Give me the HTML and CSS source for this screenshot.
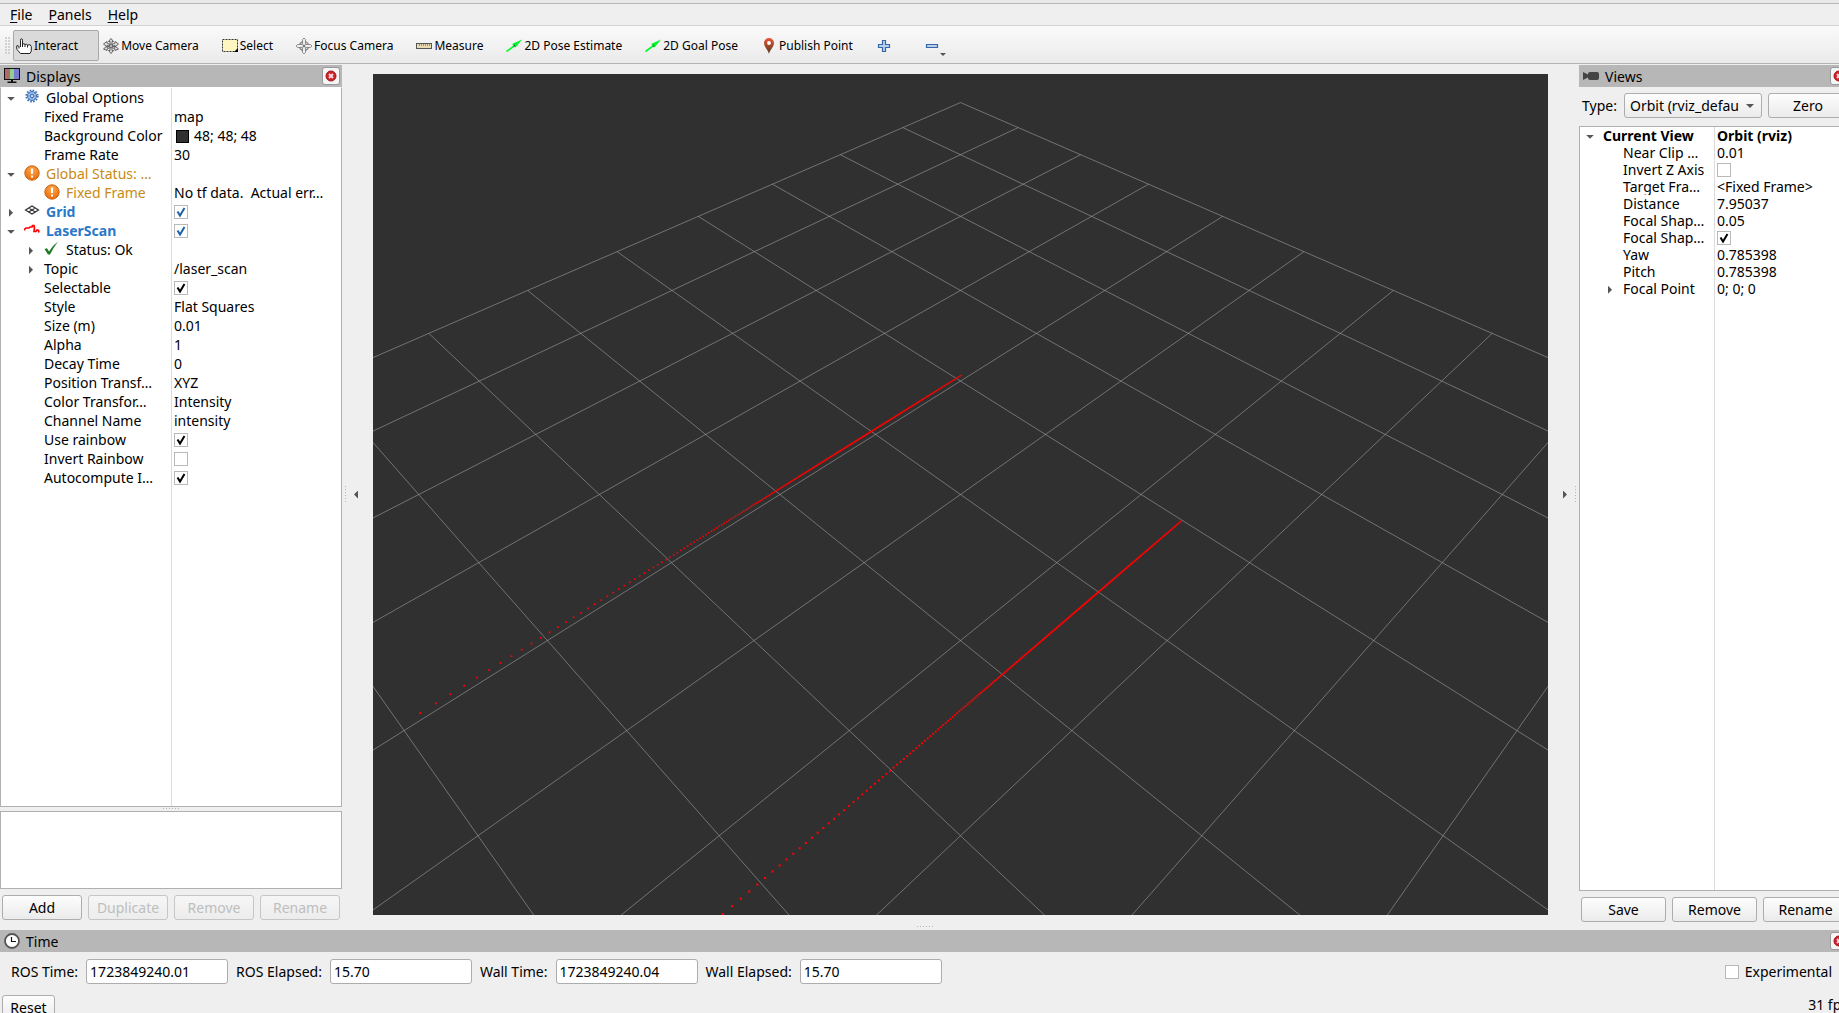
FILE: index.html
```html
<!DOCTYPE html>
<html lang="en">
<head>
  <meta charset="UTF-8" />
  <meta name="viewport" content="width=device-width, initial-scale=1.0"/>
  <title>RViz</title>
  <link rel="stylesheet" href="styles.css">
</head>
<body>

  <!-- shared icons -->
  <svg class="defs" aria-hidden="true">
    <defs>
      <radialGradient id="orange" cx="50%" cy="30%" r="70%">
        <stop offset="0" stop-color="#ffa94d"/>
        <stop offset="1" stop-color="#e8690b"/>
      </radialGradient>
      <linearGradient id="pin" x1="0" y1="0" x2="0" y2="1">
        <stop offset="0" stop-color="#f0553a"/>
        <stop offset="1" stop-color="#4a3a1c"/>
      </linearGradient>
    </defs>
    <symbol id="icon-close" viewBox="0 0 12 12">
      <circle cx="6" cy="6" r="5" fill="#cc2229" stroke="#a8141b"/>
      <path d="M4 4l4 4M8 4l-4 4" stroke="#f6d5d6" stroke-width="2"/>
    </symbol>
    <symbol id="icon-warn" viewBox="0 0 16 16">
      <circle cx="8" cy="8" r="7.2" fill="url(#orange)" stroke="#c9640f"/>
      <path d="M8 3.5v5.5M8 10.5v2" stroke="#fff" stroke-width="2"/>
    </symbol>
    <symbol id="icon-pose" viewBox="0 0 16 16">
      <path d="M0.5 13.500L8 8" stroke="#00ff2a" stroke-width="1.600"/>
      <path d="M16 1.500L6 6 9.500 9.500z" fill="#00f52d"/>
      <path d="M7 8.500l1.600-2 1 2z" fill="#0a7a20"/>
    </symbol>
  </svg>

  <div class="app">
    <nav class="menubar">
      <a href="#"><u>F</u>ile</a>
      <a href="#"><u>P</u>anels</a>
      <a href="#"><u>H</u>elp</a>
    </nav>

    <div class="toolbar">
      <span class="grip"></span>
      <button class="tool active">
        <svg class="icon" viewBox="0 0 16 16"><path d="M4.500 9V2.200q0-1.400 1-1.400t1 1.400V6q1.800-.8 2.500.5Q10.700 5.800 11.500 7q3.500-1.200 3.800 1.500V13l-1.300 2.500H4.500L1 11.500Q.2 8.500 1 7.500L3 8.500v2M6.500 6v3M9 6.500V9M11.500 7v2.500" fill="#fff" stroke="#222"/></svg>
        Interact
      </button>
      <button class="tool">
        <svg class="icon" viewBox="0 0 16 16" fill="#ddd" stroke="#555" stroke-width=".9"><path d="M8 .5l2.500 3H9v3l3-1.500V3.500l3.500 2.500-3.500 3V7.500L9.500 8l2.500 1.500V8l3.500 3-3.500 1.500V11L9 9.500v3h1.500L8 15.500l-2.500-3H7v-3L4 11v1.500L.5 11 4 8v1.500L6.500 8 4 7.500V9L.5 6 4 3.500V5l3 1.500v-3H5.500z"/><circle cx="8" cy="8" r="1.500"/></svg>
        Move Camera
      </button>
      <button class="tool">
        <svg class="icon" viewBox="0 0 16 16"><rect x=".5" y="1.500" width="15" height="12" fill="#fdf6c0" stroke="#333" stroke-dasharray="2 1"/><path d="M16 10v4h-4z" fill="#000"/></svg>
        Select
      </button>
      <button class="tool">
        <svg class="icon" viewBox="0 0 16 16" fill="none" stroke="#777"><circle cx="8" cy="8" r="4.500" stroke="#888" stroke-width="1.500"/><path d="M8 0l1.500 1.500V6.500h5L16 8l-1.500 1.500h-5v5L8 16l-1.500-1.500v-5h-5L0 8l1.500-1.500h5v-5z" fill="#eee" stroke-width=".8"/><circle cx="8" cy="8" r="1" fill="#666"/></svg>
        Focus Camera
      </button>
      <button class="tool">
        <svg class="icon" viewBox="0 0 16 16"><rect x=".5" y="5.500" width="15" height="5" fill="#e9dcb4" stroke="#555"/><path d="M3.500 6v2M5.500 6v2M7.500 6v2M9.500 6v2M11.500 6v2M13.500 6v2" stroke="#8a8268" stroke-width=".8"/></svg>
        Measure
      </button>
      <button class="tool"><svg class="icon"><use href="#icon-pose"/></svg>2D Pose Estimate</button>
      <button class="tool"><svg class="icon"><use href="#icon-pose"/></svg>2D Goal Pose</button>
      <button class="tool">
        <svg class="icon" viewBox="0 0 16 16"><path d="M8 16C7.500 12.500 3 9 3 5a5 5 0 0 1 10 0c0 4-4.500 7.500-5 11z" fill="url(#pin)"/><circle cx="8" cy="5" r="1.900" fill="#fff"/></svg>
        Publish Point
      </button>
      <button class="tool icon-only" aria-label="Add tool">
        <svg class="icon" viewBox="0 0 16 16"><path d="M6.500 2.500h3v4h4v3h-4v4h-3v-4h-4v-3h4z" fill="#b9d0ec" stroke="#3567a8" stroke-width="1.200"/></svg>
      </button>
      <button class="tool icon-only" aria-label="Remove tool">
        <svg class="icon" viewBox="0 0 16 16"><path d="M2.500 6.500h11v3h-11z" fill="#b9d0ec" stroke="#3567a8" stroke-width="1.200"/></svg>
        <span class="menu-arrow"></span>
      </button>
    </div>

    <main class="workspace">
      <section class="dock displays">
        <header class="dock-title">
          <svg class="icon" viewBox="0 0 16 16"><rect x=".5" y=".5" width="15" height="11" fill="#6ea86f" stroke="#111"/><path d="M1 1h5v10H1z" fill="#b06a6a"/><path d="M10 1h5v10h-5z" fill="#7a7ad0"/><path d="M6 1h4v10H6z" fill="#8fcf8f"/><path d="M7 12h2v1.500h3.500v1.500h-9v-1.500H7z" fill="#111"/></svg>
          <h2>Displays</h2>
          <button class="close" aria-label="Close Displays"><svg><use href="#icon-close"/></svg></button>
        </header>
        <div class="tree">
          <table>
            <tr>
              <td class="name"><i class="arrow open"></i><svg class="icon" viewBox="0 0 16 16"><circle cx="8" cy="7" r="5.700" fill="none" stroke="#3a6fb5" stroke-width="1.800" stroke-dasharray="1.600 1.380"/><circle cx="8" cy="7" r="4.500" fill="#a9c6ea" stroke="#3a6fb5"/><path d="M8 3v8M4 7h8M5.200 4.200l5.600 5.600M10.800 4.200L5.200 9.800" stroke="#5d8cc8" stroke-width=".8"/><circle cx="8" cy="7" r="1.500" fill="#fff" stroke="#3a6fb5"/></svg>Global Options</td>
              <td></td>
            </tr>
            <tr><td class="name child">Fixed Frame</td><td>map</td></tr>
            <tr><td class="name child">Background Color</td><td><span class="swatch"></span>48; 48; 48</td></tr>
            <tr><td class="name child">Frame Rate</td><td>30</td></tr>
            <tr class="warn"><td class="name"><i class="arrow open"></i><svg class="icon"><use href="#icon-warn"/></svg>Global Status: …</td><td></td></tr>
            <tr class="warn"><td class="name child"><svg class="icon"><use href="#icon-warn"/></svg>Fixed Frame</td><td>No tf data.  Actual err…</td></tr>
            <tr class="display">
              <td class="name"><i class="arrow"></i><svg class="icon" viewBox="0 0 16 16" fill="none" stroke="#333" stroke-width="1.200"><path d="M1.500 7L8 3l6.500 4L8 11zM4.700 5l6.600 4M11.300 5L4.700 9"/></svg><label for="grid">Grid</label></td>
              <td><input type="checkbox" id="grid" class="blue" checked></td>
            </tr>
            <tr class="display">
              <td class="name"><i class="arrow open"></i><svg class="icon" viewBox="0 0 16 16" fill="none" stroke="#f00" stroke-width="1.700"><path d="M.5 8.500V7.500L2 6h3l1-1h2l.5-1.500H10l.5 3-.5 3h2l1-1.500 1.500.5.5 2"/></svg><label for="laser">LaserScan</label></td>
              <td><input type="checkbox" id="laser" class="blue" checked></td>
            </tr>
            <tr><td class="name child"><i class="arrow"></i><svg class="icon" viewBox="0 0 16 16"><path d="M.5 8L3 7.200l2 3.300Q8.500 4.500 14 .5 9.500 6.500 6 13.500H4z" fill="#1d7a22"/></svg>Status: Ok</td><td></td></tr>
            <tr><td class="name child"><i class="arrow"></i>Topic</td><td>/laser_scan</td></tr>
            <tr><td class="name child"><label for="selectable">Selectable</label></td><td><input type="checkbox" id="selectable" checked></td></tr>
            <tr><td class="name child">Style</td><td>Flat Squares</td></tr>
            <tr><td class="name child">Size (m)</td><td>0.01</td></tr>
            <tr><td class="name child">Alpha</td><td>1</td></tr>
            <tr><td class="name child">Decay Time</td><td>0</td></tr>
            <tr><td class="name child">Position Transf…</td><td>XYZ</td></tr>
            <tr><td class="name child">Color Transfor…</td><td>Intensity</td></tr>
            <tr><td class="name child">Channel Name</td><td>intensity</td></tr>
            <tr><td class="name child"><label for="rainbow">Use rainbow</label></td><td><input type="checkbox" id="rainbow" checked></td></tr>
            <tr><td class="name child"><label for="invert-rainbow">Invert Rainbow</label></td><td><input type="checkbox" id="invert-rainbow"></td></tr>
            <tr><td class="name child"><label for="autocompute">Autocompute I…</label></td><td><input type="checkbox" id="autocompute" checked></td></tr>
          </table>
        </div>
        <div class="hsplit"><span class="dots"></span></div>
        <div class="description"></div>
        <div class="buttons">
          <button class="btn">Add</button>
          <button class="btn" disabled>Duplicate</button>
          <button class="btn" disabled>Remove</button>
          <button class="btn" disabled>Rename</button>
        </div>
      </section>

      <div class="vsplit"><span class="dots"></span><i class="arrow left"></i></div>

      <div class="viewport"><canvas id="scene"></canvas></div>

      <div class="vsplit right"><i class="arrow"></i><span class="dots"></span></div>

      <section class="dock views">
        <header class="dock-title">
          <svg class="icon" viewBox="0 0 16 16" fill="#444"><path d="M0 4l5 2.500V6q0-2 2-2h7q2 0 2 2v4q0 2-2 2H7q-2 0-2-2v-.5L0 12z"/></svg>
          <h2>Views</h2>
          <button class="close" aria-label="Close Views"><svg><use href="#icon-close"/></svg></button>
        </header>
        <div class="type-row">
          <label for="view-type">Type:</label>
          <select id="view-type"><option>Orbit (rviz_default_plugins)</option></select>
          <button class="btn">Zero</button>
        </div>
        <div class="tree">
          <table>
            <tr class="current"><td class="name"><i class="arrow open"></i>Current View</td><td>Orbit (rviz)</td></tr>
            <tr><td class="name child">Near Clip …</td><td>0.01</td></tr>
            <tr><td class="name child"><label for="invert-z">Invert Z Axis</label></td><td><input type="checkbox" id="invert-z"></td></tr>
            <tr><td class="name child">Target Fra…</td><td>&lt;Fixed Frame&gt;</td></tr>
            <tr><td class="name child">Distance</td><td>7.95037</td></tr>
            <tr><td class="name child">Focal Shap…</td><td>0.05</td></tr>
            <tr><td class="name child"><label for="focal-fixed">Focal Shap…</label></td><td><input type="checkbox" id="focal-fixed" checked></td></tr>
            <tr><td class="name child">Yaw</td><td>0.785398</td></tr>
            <tr><td class="name child">Pitch</td><td>0.785398</td></tr>
            <tr><td class="name child"><i class="arrow"></i>Focal Point</td><td>0; 0; 0</td></tr>
          </table>
        </div>
        <div class="buttons">
          <button class="btn">Save</button>
          <button class="btn">Remove</button>
          <button class="btn">Rename</button>
        </div>
      </section>

      <span class="dots bottom-dots"></span>
    </main>

    <section class="time">
      <header class="dock-title">
        <svg class="icon" viewBox="0 0 16 16"><circle cx="8" cy="8" r="7" fill="#fff" stroke="#555" stroke-width="1.800"/><path d="M7.500 4v4.500H12" fill="none" stroke="#111" stroke-width="1.200"/></svg>
        <h2>Time</h2>
        <button class="close" aria-label="Close Time"><svg><use href="#icon-close"/></svg></button>
      </header>
      <div class="time-row">
        <label for="ros-time">ROS Time:</label>
        <input type="text" id="ros-time" value="1723849240.01">
        <label for="ros-elapsed">ROS Elapsed:</label>
        <input type="text" id="ros-elapsed" value="15.70">
        <label for="wall-time">Wall Time:</label>
        <input type="text" id="wall-time" value="1723849240.04">
        <label for="wall-elapsed">Wall Elapsed:</label>
        <input type="text" id="wall-elapsed" value="15.70">
        <span class="experimental">
          <input type="checkbox" id="experimental">
          <label for="experimental">Experimental</label>
        </span>
      </div>
      <footer class="status">
        <button class="btn reset">Reset</button>
        <span>31 fps</span>
      </footer>
    </section>
  </div>

  <script src="script.js"></script>
</body>
</html>
```
FILE: styles.css
```css
* {
  box-sizing: border-box;
}

body {
  margin: 0;
  height: 100vh;
  overflow: hidden;
  background: #efefef;
  color: #000;
  font-family: "Noto Sans", sans-serif;
  font-size: 14px;
  line-height: 19px;
}

button, input, select {
  font: inherit;
  color: inherit;
}

.defs {
  position: absolute;
  width: 0;
  height: 0;
}

/* the window is a bit larger than the screen */
.app {
  display: flex;
  flex-direction: column;
  width: calc(100% + 11px);
  height: calc(100vh + 9px);
}

.icon {
  flex: none;
  width: 16px;
  height: 16px;
}

/* Menu and toolbar */
.menubar {
  display: flex;
  gap: 16px;
  height: 26px;
  padding: 2px 10px 0;
  border-top: 3px solid #e9e9e9;
  border-bottom: 1px solid #d3d3d3;
  box-shadow: inset 0 1px #b8b8b8;
}

.menubar a {
  color: inherit;
  text-decoration: none;
}

.menubar u {
  text-underline-offset: 2px;
}

.toolbar {
  display: flex;
  align-items: center;
  height: 38px;
  padding: 2px 5px 0;
  background: linear-gradient(#fafafa, #eaeaea);
  border-bottom: 1px solid #b4b4b4;
}

.grip {
  width: 5px;
  height: 17px;
  margin-right: 3px;
  background: radial-gradient(circle at 1px 1px, #d2d2d2 1px, transparent 1px) 0 0 / 3px 3px;
}

.tool {
  position: relative;
  display: flex;
  align-items: center;
  gap: 2px;
  height: 31px;
  margin-right: 1px;
  padding: 0 18px 0 2px;
  border: 1px solid transparent;
  border-radius: 2px;
  background: none;
  font-size: 12px;
  white-space: nowrap;
}

.tool.active {
  padding-right: 20px;
  border-color: #a9a9a9;
  background: #dadada;
}

.tool.icon-only {
  width: 47px;
}

.menu-arrow {
  position: absolute;
  left: 18px;
  bottom: 4px;
  border: 3px solid transparent;
  border-top-color: #555;
  border-bottom: 0;
}

/* Docks */
.workspace {
  position: relative;
  display: flex;
  flex: 1;
  min-height: 0;
  padding-top: 1px;
}

.dock {
  display: flex;
  flex: none;
  flex-direction: column;
}

.displays {
  --split: 170px;
  --row: 19px;
  width: 342px;
  padding-bottom: 10px;
}

.views {
  --split: 134px;
  --row: 17px;
  width: 271px;
  padding-bottom: 8px;
}

.dock-title {
  display: flex;
  flex: none;
  align-items: center;
  gap: 6px;
  height: 22px;
  padding: 0 2px 0 4px;
  background: #b7b7b7;
}

.dock-title h2 {
  flex: 1;
  margin: 0;
  font-size: 14px;
  font-weight: normal;
}

.close {
  display: flex;
  align-items: center;
  justify-content: center;
  width: 18px;
  height: 18px;
  padding: 0;
  border: 1px solid #999;
  border-radius: 3px;
  background: #f6f6f6;
}

.close svg {
  width: 12px;
  height: 12px;
}

/* Property trees */
.tree {
  flex: 1;
  border: 1px solid #b0b0b0;
  background: linear-gradient(#dcdcdc, #dcdcdc) var(--split) 0 / 1px 100% no-repeat #fff;
}

.displays .tree {
  border-top-color: #fff;
}

.tree table {
  width: 100%;
  table-layout: fixed;
  border-collapse: collapse;
}

.tree td {
  height: var(--row);
  padding: 0 0 0 2px;
  line-height: var(--row);
  white-space: pre;
  overflow: hidden;
}

.tree .name {
  position: relative;
  width: calc(var(--split) + 1px);
  padding-left: 23px;
}

.tree .child {
  padding-left: 43px;
}

.tree .icon {
  margin-right: 6px;
  vertical-align: -2px;
}

.displays .tree .icon {
  height: 16px;
}

.arrow {
  display: inline-block;
  width: 4px;
  height: 8px;
  background: #555;
  clip-path: polygon(0 0, 100% 50%, 0 100%);
}

.arrow.left {
  clip-path: polygon(100% 0, 0 50%, 100% 100%);
}

.arrow.open {
  width: 8px;
  height: 4px;
  clip-path: polygon(0 0, 100% 0, 50% 100%);
}

.tree .arrow {
  margin: 0 11px 1px -15px;
  vertical-align: middle;
}

.tree .arrow.open {
  margin: 0 9px 1px -17px;
}

.warn .name {
  color: #c88a14;
}

.display .name {
  color: #2a78c8;
  font-weight: bold;
}

.current {
  font-weight: bold;
}

.swatch {
  display: inline-block;
  width: 13px;
  height: 13px;
  margin: 0 5px 0 2px;
  border: 1px solid #000;
  background: #303030;
  vertical-align: -2px;
}

input[type="checkbox"] {
  appearance: none;
  width: 14px;
  height: 14px;
  margin: 0;
  border: 1px solid #b9b9b9;
  background: #fff center / 12px 12px no-repeat;
  vertical-align: -2px;
}

input[type="checkbox"]:checked {
  background-image: url("data:image/svg+xml,%3Csvg xmlns='http://www.w3.org/2000/svg' viewBox='0 0 12 12'%3E%3Cpath d='M2.500 5.500L5 9.500 9.500 2' fill='none' stroke='%23000' stroke-width='2'/%3E%3C/svg%3E");
}

input.blue:checked {
  background-image: url("data:image/svg+xml,%3Csvg xmlns='http://www.w3.org/2000/svg' viewBox='0 0 12 12'%3E%3Cpath d='M2.500 5.500L5 9.500 9.500 2' fill='none' stroke='%231c62a8' stroke-width='2'/%3E%3C/svg%3E");
}

.description {
  height: 78px;
  border: 1px solid #b0b0b0;
  background: #fff;
}

.buttons {
  display: flex;
  gap: 6px;
  padding: 6px 2px 0;
}

.btn {
  flex: 1;
  height: 25px;
  padding: 0;
  border: 1px solid #adadad;
  border-radius: 3px;
  background: linear-gradient(#fdfdfd, #ebebeb);
}

.btn:disabled {
  border-color: #c6c6c6;
  background: linear-gradient(#f6f6f6, #ececec);
  color: #bebebe;
}

.type-row {
  display: flex;
  align-items: center;
  gap: 6px;
  padding: 6px 2px 8px 3px;
}

.type-row label {
  width: 36px;
}

.type-row select {
  appearance: none;
  width: 138px;
  height: 25px;
  padding: 0 22px 0 5px;
  border: 1px solid #adadad;
  border-radius: 3px;
  background:
    url("data:image/svg+xml,%3Csvg xmlns='http://www.w3.org/2000/svg' viewBox='0 0 8 4'%3E%3Cpath d='M0 0h8L4 4z' fill='%23555'/%3E%3C/svg%3E") right 7px center / 8px 4px no-repeat,
    linear-gradient(#fdfdfd, #ebebeb);
}

/* Splitters */
.dots {
  background: repeating-linear-gradient(90deg, #b5b5b5 0 1px, transparent 1px 3px);
}

.hsplit {
  display: flex;
  justify-content: center;
  height: 4px;
  padding: 1px 0 0 1px;
}

.hsplit .dots {
  width: 17px;
  height: 1px;
}

.vsplit {
  display: flex;
  flex: none;
  align-items: center;
  gap: 8px;
  width: 31px;
  padding: 0 3px 6px;
}

.vsplit.right {
  justify-content: flex-end;
}

.vsplit .dots {
  width: 1px;
  height: 17px;
  background: repeating-linear-gradient(#b5b5b5 0 1px, transparent 1px 3px);
}

.bottom-dots {
  position: absolute;
  left: 50%;
  bottom: 3px;
  width: 17px;
  height: 1px;
  margin-left: -8px;
}

/* 3D view */
.viewport {
  flex: 1;
  min-width: 0;
  margin: 9px 0 15px;
  background: #303030;
}

.viewport canvas {
  display: block;
  width: 100%;
  height: 100%;
}

/* Time panel */
.time-row {
  display: flex;
  align-items: center;
  gap: 8px;
  padding: 7px 18px 0 11px;
}

.time-row input[type="text"] {
  width: 142px;
  height: 25px;
  padding: 0 3px;
  border: 1px solid #adadad;
  border-radius: 3px;
  background: #fff;
}

.experimental {
  display: flex;
  align-items: center;
  gap: 6px;
  margin-left: auto;
}

.status {
  display: flex;
  justify-content: space-between;
  padding: 11px 2px 2px;
}

.reset {
  flex: none;
  width: 53px;
}
```
FILE: script.js
```javascript
const canvas = document.getElementById('scene');
const ctx = canvas.getContext('2d');

// orbit camera, looks at the origin with yaw = pitch = 45deg
const distance = 7.95037;
const fov = Math.PI / 4;

function project(x, y) {
  const f = canvas.height / 2 / Math.tan(fov / 2);
  const forward = -(x + y) / 2;
  const side = (x - y) / Math.SQRT2;
  const depth = distance + forward;
  return [
    canvas.width / 2 + f * side / depth,
    canvas.height / 2 - f * forward / depth,
    f / depth
  ];
}

function drawLine(x1, y1, x2, y2) {
  const a = project(x1, y1);
  const b = project(x2, y2);
  ctx.beginPath();
  ctx.moveTo(a[0], a[1]);
  ctx.lineTo(b[0], b[1]);
  ctx.stroke();
}

// one laser hit every 0.4 degrees on a wall parallel to the y axis
function drawWall(wallX, fromDeg, toDeg) {
  for (let deg = toDeg; deg >= fromDeg; deg -= 0.4) {
    const y = Math.abs(wallX) * Math.tan(deg * Math.PI / 180);
    const p = project(wallX, y);
    const size = 0.012 * p[2];
    ctx.fillRect(p[0] - size / 2, p[1] - size / 2, size, size);
  }
}

function draw() {
  canvas.width = canvas.clientWidth;
  canvas.height = canvas.clientHeight;

  ctx.strokeStyle = 'rgba(160, 160, 164, 0.6)';
  ctx.lineWidth = 1;
  for (let i = -5; i <= 5; i++) {
    drawLine(i, -5, i, 5);
    drawLine(-5, i, 5, i);
  }

  ctx.fillStyle = '#ff0000';
  drawWall(-1.053, -45.3, 74.78);
  drawWall(1.394, -35.3, 69.62);
}

window.addEventListener('resize', draw);
draw();
```
